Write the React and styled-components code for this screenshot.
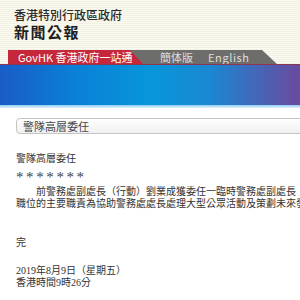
import React from "react";
import styled, { createGlobalStyle } from "styled-components";

const GlobalStyle = createGlobalStyle`
  html, body {
    margin: 0;
    padding: 0;
    background: #fff;
    overflow: hidden;
  }
  body {
    font-family: "Noto Sans CJK TC", "Noto Sans", sans-serif;
  }
`;

const Page = styled.div`
  width: 300px;
  height: 300px;
  overflow: hidden;
`;

const Header = styled.div`
  background: repeating-linear-gradient(
    to bottom,
    #fbfaf1 0px,
    #fbfaf1 1px,
    #f2f1e3 1px,
    #f2f1e3 2px
  );
  padding: 8px 0 0 0;
`;

const GovName = styled.div`
  padding-left: 14px;
  font-size: 12px;
  line-height: 14px;
  font-weight: 500;
  color: #2b2b2b;
`;

const PressTitle = styled.div`
  padding-left: 14px;
  margin-top: 1px;
  font-size: 15px;
  line-height: 18px;
  font-weight: 700;
  letter-spacing: 1.5px;
  color: #1f1f1f;
`;

const TabRow = styled.div`
  margin-top: 9px;
  padding-left: 8px;
  display: flex;
  border-bottom: 1px solid #8c3650;
`;

const TabBar = styled.div`
  width: 269px;
  height: 14px;
  display: flex;
  align-items: center;
  background: #6d6d6b;
  clip-path: polygon(0 0, calc(100% - 15px) 0, 100% 100%, 0 100%);
`;

const RedTab = styled.div`
  width: 135px;
  height: 100%;
  display: flex;
  align-items: center;
  padding-left: 10px;
  box-sizing: border-box;
  background: #c6283b;
  color: #fff;
  font-size: 11px;
  clip-path: polygon(0 0, calc(100% - 13px) 0, 100% 100%, 0 100%);
`;

const GrayLink = styled.span`
  color: #dedede;
  font-size: 11px;
  margin-left: ${(p) => p.$gap}px;
  letter-spacing: ${(p) => p.$spacing || 0}px;
`;

const Banner = styled.div`
  height: 40px;
  background: linear-gradient(
    to right,
    #1a5cc6 0%,
    #0a80d6 25%,
    #0896da 50%,
    #1a88d2 70%,
    #4a62b4 88%,
    #6a4a9e 100%
  );
`;

const BannerEdge = styled.div`
  height: 3px;
  background: linear-gradient(to bottom, #8fcdf2, #dff2fc);
`;

const Content = styled.div`
  padding: 0 0 0 16px;
  font-family: "Liberation Serif", "Noto Sans CJK TC", serif;
  color: #333;
  font-size: 10px;
`;

const TitleBox = styled.div`
  margin-top: 10px;
  height: 14px;
  width: 320px;
  border: 1px solid #c4c4c4;
  border-radius: 4px;
  background: linear-gradient(to bottom, #fff, #f0f0f0);
  display: flex;
  align-items: center;
  padding-left: 6px;
  font-family: "Noto Sans CJK TC", sans-serif;
  font-size: 11px;
  color: #444;
`;

const Line = styled.div`
  line-height: ${(p) => p.$lh || 14}px;
  margin-top: ${(p) => p.$mt || 0}px;
  padding-left: ${(p) => p.$indent || 0}px;
  white-space: nowrap;
`;

const Stars = styled.div`
  line-height: 14px;
  font-size: 15px;
  letter-spacing: 2.6px;
  padding-top: 4px;
  height: 10px;
  color: #444;
`;

export default function App() {
  return (
    <Page>
      <GlobalStyle />
      <Header>
        <GovName>香港特別行政區政府</GovName>
        <PressTitle>新聞公報</PressTitle>
        <TabRow>
          <TabBar>
            <RedTab>GovHK 香港政府一站通</RedTab>
            <GrayLink $gap={17}>簡体版</GrayLink>
            <GrayLink $gap={15} $spacing={0.6}>
              English
            </GrayLink>
          </TabBar>
        </TabRow>
      </Header>
      <Banner />
      <BannerEdge />
      <Content>
        <TitleBox>警隊高層委任</TitleBox>
        <Line $mt={18}>警隊高層委任</Line>
        <Stars>*******</Stars>
        <Line $mt={6} $lh={12} $indent={20}>
          前警務處副處長（行動）劉業成獲委任一臨時警務處副處長
        </Line>
        <Line $lh={12}>
          職位的主要職責為協助警務處處長處理大型公眾活動及策劃未來發展工作
        </Line>
        <Line $mt={27} $lh={12}>完</Line>
        <Line $mt={16} $lh={12}>2019年8月9日（星期五）</Line>
        <Line $lh={12}>香港時間9時26分</Line>
      </Content>
    </Page>
  );
}
